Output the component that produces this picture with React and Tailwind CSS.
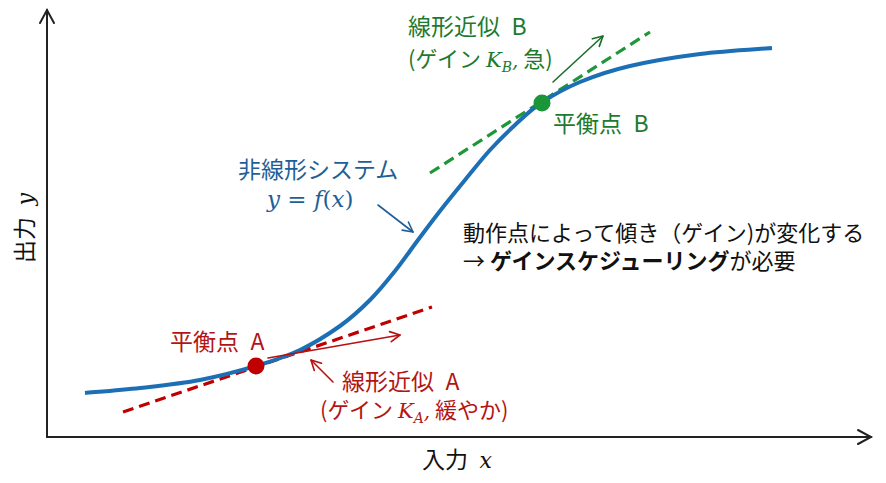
import React from "react";

const curvePts = [
  [85, 393], [140, 388], [200, 380], [256, 366], [300, 350], [340, 326],
  [370, 300], [395, 271], [418, 240], [440, 211], [465, 180], [490, 150],
  [515, 125], [541, 103], [580, 82], [630, 66], [700, 54], [772, 48],
];

// catmull-rom through the sampled points -> cubic bezier path
const smoothPath = (pts) => {
  let d = `M${pts[0][0]},${pts[0][1]}`;
  for (let i = 0; i < pts.length - 1; i++) {
    const p0 = pts[i - 1] || pts[i];
    const p1 = pts[i];
    const p2 = pts[i + 1];
    const p3 = pts[i + 2] || p2;
    const c1 = [p1[0] + (p2[0] - p0[0]) / 6, p1[1] + (p2[1] - p0[1]) / 6];
    const c2 = [p2[0] - (p3[0] - p1[0]) / 6, p2[1] - (p3[1] - p1[1]) / 6];
    d += ` C${c1[0]},${c1[1]} ${c2[0]},${c2[1]} ${p2[0]},${p2[1]}`;
  }
  return d;
};

const Arrow = ({ x1, y1, x2, y2, color, width = 1.6, head = 11 }) => {
  const a = Math.atan2(y2 - y1, x2 - x1);
  const s = Math.PI / 6.5;
  const hx1 = x2 - head * Math.cos(a - s);
  const hy1 = y2 - head * Math.sin(a - s);
  const hx2 = x2 - head * Math.cos(a + s);
  const hy2 = y2 - head * Math.sin(a + s);
  return (
    <g stroke={color} strokeWidth={width} fill="none" strokeLinecap="round" strokeLinejoin="round">
      <line x1={x1} y1={y1} x2={x2} y2={y2} />
      <polyline points={`${hx1},${hy1} ${x2},${y2} ${hx2},${hy2}`} />
    </g>
  );
};

const sans = "font-['Noto_Sans_CJK_JP','Noto_Sans',sans-serif]";
const math = "font-['DejaVu_Serif',serif] italic";

const Gain = ({ sub, tail }) => (
  <>
    (ゲイン <span className={`${math} text-[21px]`}>K</span>
    <span className={`${math} text-[14px] relative top-[5px]`}>{sub}</span>
    <span className={`${math} text-[20px]`}>,</span> {tail})
  </>
);

const Label = ({ className, children }) => (
  <div className={`absolute text-[23px] leading-[26px] whitespace-nowrap ${className}`}>{children}</div>
);

export default function App() {
  return (
    <div className={`relative w-[886px] h-[483px] bg-white overflow-hidden ${sans}`}>
      <svg className="absolute inset-0" width="886" height="483" viewBox="0 0 886 483">
        {/* axes */}
        <g stroke="#222" strokeWidth="2" fill="none" strokeLinecap="round">
          <polyline points="47,10 47,437 871,437" />
          <polyline points="40,23 47,10 54,23" />
          <polyline points="858,430 871,437 858,444" />
        </g>

        {/* tangents */}
        <line x1="123" y1="412" x2="432" y2="307" stroke="#c00000" strokeWidth="3.2" strokeDasharray="11 6" />
        <line x1="430" y1="173" x2="650" y2="32" stroke="#1f9638" strokeWidth="3.2" strokeDasharray="11 6" />

        {/* system curve */}
        <path d={smoothPath(curvePts)} stroke="#1d6fb5" strokeWidth="4" fill="none" />

        {/* operating points */}
        <circle cx="256" cy="366" r="8.5" fill="#c00000" />
        <circle cx="542" cy="103" r="8.5" fill="#1a9638" />

        {/* pointers */}
        <Arrow x1={553} y1={82} x2={603} y2={36} color="#1b6e2a" />
        <Arrow x1={268} y1={358} x2={400} y2={335} color="#b80f0f" />
        <Arrow x1={333} y1={382} x2={311} y2={360} color="#b80f0f" />
        <Arrow x1={378} y1={205} x2={413} y2={232} color="#1f5f99" />
      </svg>

      {/* green labels */}
      <Label className="left-[408px] top-[12px] text-[#1e7a2e]">線形近似&ensp;B</Label>
      <Label className="left-[408px] top-[44px] text-[#1e7a2e] !text-[22px]">
        <Gain sub="B" tail="急" />
      </Label>
      <Label className="left-[553px] top-[109px] text-[#1e7a2e]">平衡点&ensp;B</Label>

      {/* blue labels */}
      <Label className="left-[238px] top-[155px] text-[#1f5f99]">非線形システム</Label>
      <div className={`absolute left-[267px] top-[185px] text-[23px] leading-[28px] text-[#1f5f99] whitespace-nowrap ${math}`}>
        y <span className="not-italic">=</span> f<span className="not-italic">(</span>x<span className="not-italic">)</span>
      </div>

      {/* red labels */}
      <Label className="left-[170px] top-[327px] text-[#b31515]">平衡点&ensp;A</Label>
      <Label className="left-[342px] top-[367px] text-[#b31515]">線形近似&ensp;A</Label>
      <Label className="left-[320px] top-[395px] text-[#b31515] !text-[22px]">
        <Gain sub="A" tail="緩やか" />
      </Label>

      {/* note */}
      <div className="absolute left-[463px] top-[217px] flex flex-col text-[22px] leading-[28px] text-[#111] whitespace-nowrap">
        <span>動作点によって傾き（ゲイン)が変化する</span>
        <span>
          → <span className="font-bold">ゲインスケジューリング</span>が必要
        </span>
      </div>

      {/* axis labels */}
      <Label className="left-[422px] top-[445px] text-[#111]">
        入力&ensp;<span className={`${math} text-[22px]`}>x</span>
      </Label>
      <div className="absolute left-[-17px] top-[215px] w-[80px] h-[26px] -rotate-90 text-[23px] leading-[26px] text-[#111] whitespace-nowrap text-center">
        出力&ensp;<span className={`${math} text-[22px]`}>y</span>
      </div>
    </div>
  );
}
